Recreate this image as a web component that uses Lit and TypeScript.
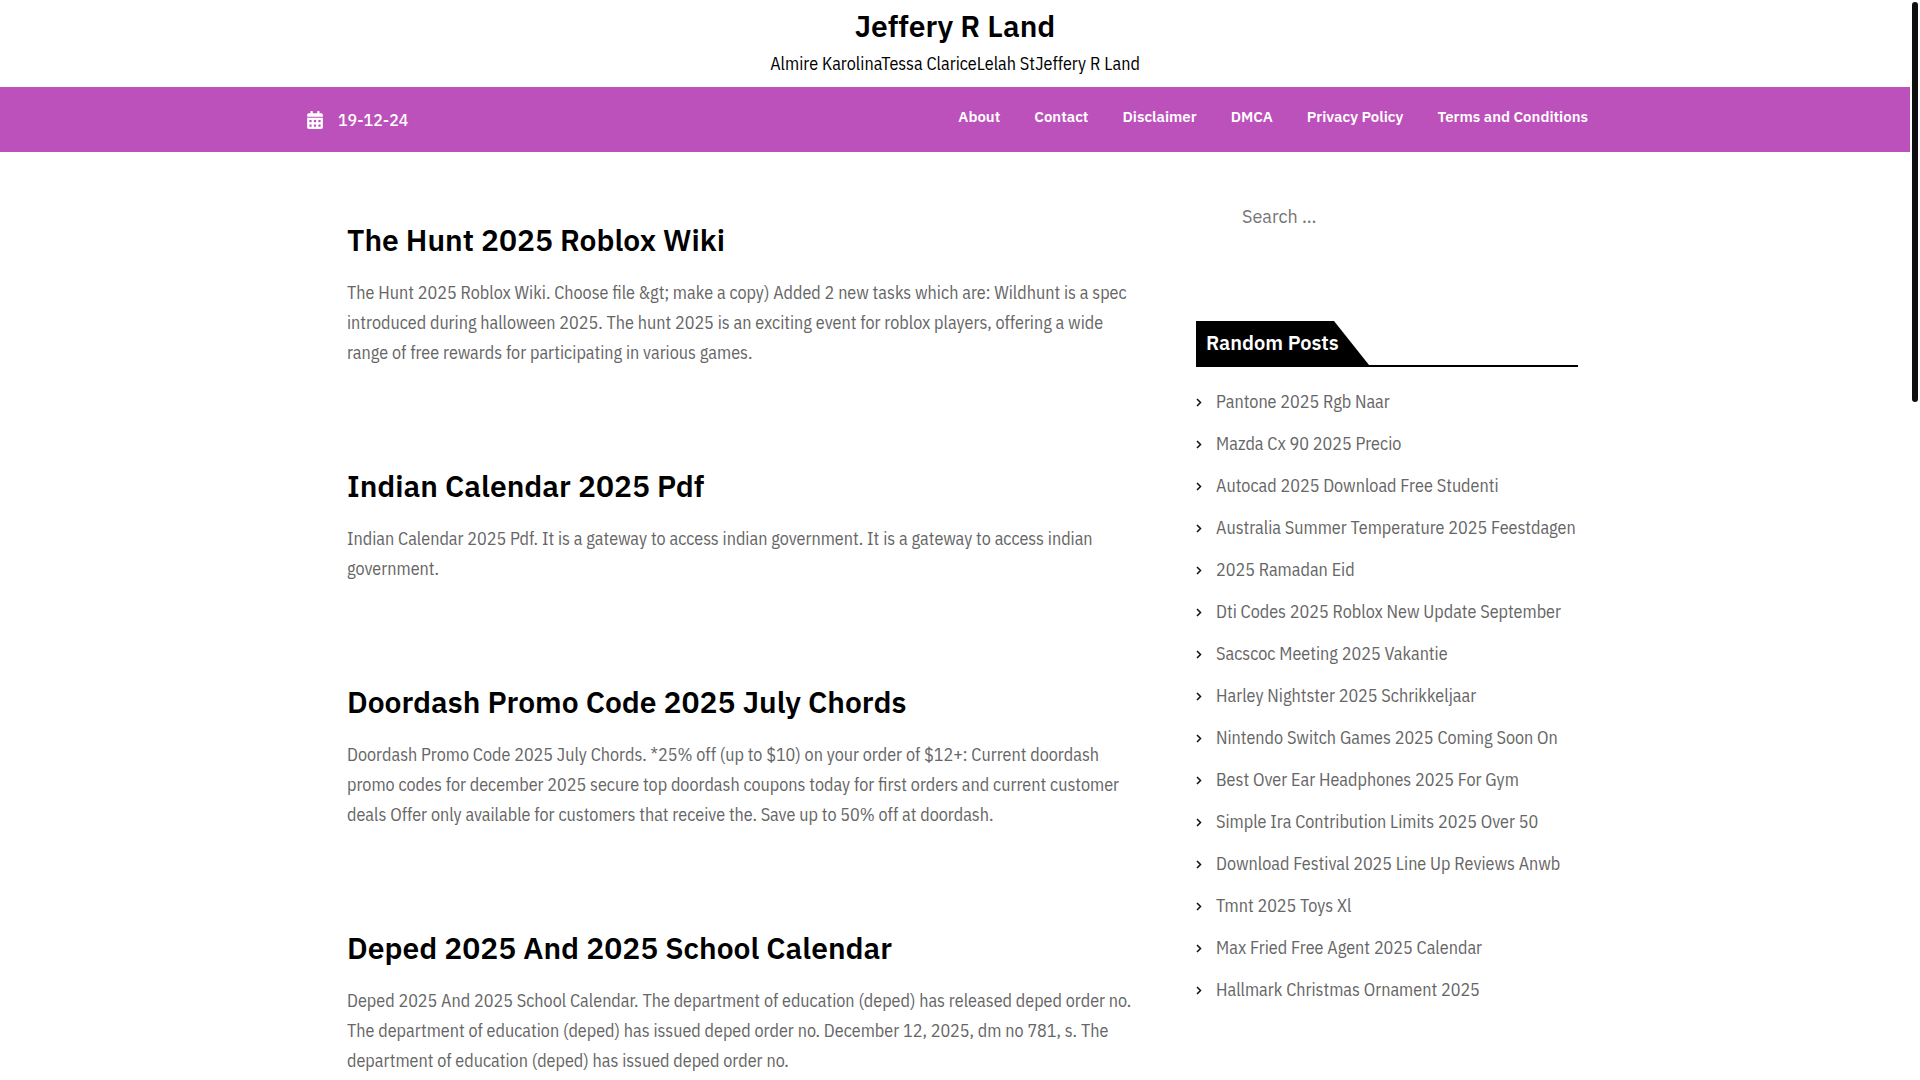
import { LitElement, html, css } from "lit";
import { customElement } from "lit/decorators.js";

interface Post {
  title: string;
  text: string;
}

const NAV = ["About", "Contact", "Disclaimer", "DMCA", "Privacy Policy", "Terms and Conditions"];

const POSTS: Post[] = [
  {
    title: "The Hunt 2025 Roblox Wiki",
    text: "The Hunt 2025 Roblox Wiki. Choose file &gt; make a copy) Added 2 new tasks which are: Wildhunt is a spec introduced during halloween 2025. The hunt 2025 is an exciting event for roblox players, offering a wide range of free rewards for participating in various games.",
  },
  {
    title: "Indian Calendar 2025 Pdf",
    text: "Indian Calendar 2025 Pdf. It is a gateway to access indian government. It is a gateway to access indian government.",
  },
  {
    title: "Doordash Promo Code 2025 July Chords",
    text: "Doordash Promo Code 2025 July Chords. *25% off (up to $10) on your order of $12+: Current doordash promo codes for december 2025 secure top doordash coupons today for first orders and current customer deals Offer only available for customers that receive the. Save up to 50% off at doordash.",
  },
  {
    title: "Deped 2025 And 2025 School Calendar",
    text: "Deped 2025 And 2025 School Calendar. The department of education (deped) has released deped order no. The department of education (deped) has issued deped order no. December 12, 2025, dm no 781, s. The department of education (deped) has issued deped order no.",
  },
];

const RANDOM = [
  "Pantone 2025 Rgb Naar",
  "Mazda Cx 90 2025 Precio",
  "Autocad 2025 Download Free Studenti",
  "Australia Summer Temperature 2025 Feestdagen",
  "2025 Ramadan Eid",
  "Dti Codes 2025 Roblox New Update September",
  "Sacscoc Meeting 2025 Vakantie",
  "Harley Nightster 2025 Schrikkeljaar",
  "Nintendo Switch Games 2025 Coming Soon On",
  "Best Over Ear Headphones 2025 For Gym",
  "Simple Ira Contribution Limits 2025 Over 50",
  "Download Festival 2025 Line Up Reviews Anwb",
  "Tmnt 2025 Toys Xl",
  "Max Fried Free Agent 2025 Calendar",
  "Hallmark Christmas Ornament 2025",
];

@customElement("app-root")
export class AppRoot extends LitElement {
  static styles = css`
    :host {
      --body-font: "IBM Plex Sans Condensed", "IBM Plex Sans", Roboto, sans-serif;
      display: block;
      padding-right: 10px;
      background: #fff;
      color: #000;
      font-family: "IBM Plex Sans", Roboto, "Liberation Sans", sans-serif;
      font-size: 16px;
      line-height: 30px;
    }
    * {
      box-sizing: border-box;
    }
    a {
      color: inherit;
      text-decoration: none;
    }
    h1,
    h2,
    h3,
    p,
    ul {
      margin: 0;
      padding: 0;
    }
    ul {
      list-style: none;
    }
    .brand {
      padding: 8px 16px;
      text-align: center;
    }
    .site-title,
    .post-title {
      font-size: 30px;
      line-height: 36px;
      font-weight: 600;
    }
    .tagline {
      padding-top: 5px;
      font-family: var(--body-font);
      font-size: 18px;
    }
    .bar {
      background: #bd51bc;
      color: #fff;
    }
    .container {
      max-width: 1320px;
      margin: 0 auto;
      padding: 0 12px;
    }
    .bar-inner {
      display: flex;
      align-items: flex-start;
      justify-content: space-between;
      padding-top: 15px;
      padding-bottom: 14px;
    }
    .date {
      display: flex;
      align-items: center;
      gap: 15px;
      padding: 3px 0;
      font-weight: 500;
    }
    .date svg {
      width: 16px;
      height: 18px;
    }
    .menu {
      display: flex;
      gap: 34px;
      padding-right: 15px;
      font-size: 15px;
      font-weight: 600;
    }
    .layout {
      display: grid;
      grid-template-columns: minmax(0, 790fr) minmax(0, 382fr);
      gap: 59px;
      padding: 0 25px 0 40px;
    }
    .posts {
      display: flex;
      flex-direction: column;
      gap: 100px;
      padding-top: 70px;
    }
    .post-text {
      margin-top: 20px;
      color: #666;
      font-family: var(--body-font);
      font-size: 18px;
    }
    .sidebar {
      padding-top: 43px;
    }
    .search {
      display: block;
      width: 100%;
      height: 42px;
      padding: 0 46px;
      border: 0;
      outline: 0;
      background: transparent;
      color: #666;
      font: inherit;
      font-size: 18px;
    }
    .search::placeholder {
      color: #757575;
      opacity: 1;
    }
    .widget-head {
      display: flex;
      margin-top: 84px;
      border-bottom: 2px solid #000;
    }
    .widget-title {
      width: 173px;
      height: 44px;
      padding-left: 10px;
      background: #000;
      clip-path: polygon(0 0, 138px 0, 100% 100%, 0 100%);
      color: #fff;
      font-size: 20px;
      line-height: 44px;
      font-weight: 600;
      white-space: nowrap;
    }
    .links {
      display: flex;
      flex-direction: column;
      gap: 12px;
      padding-top: 20px;
      color: #666;
      font-family: var(--body-font);
      font-size: 18px;
    }
    .links li {
      display: flex;
      align-items: center;
      gap: 14px;
      white-space: nowrap;
    }
    .links svg {
      width: 6px;
      height: 9px;
      flex: none;
    }
    .scrollbar {
      position: fixed;
      top: 2px;
      right: 2px;
      width: 6px;
      height: 400px;
      border-radius: 3px;
      background: #0f0f0f;
    }
  `;

  render() {
    return html`
      <header>
        <div class="brand">
          <h1 class="site-title"><a href="#">Jeffery R Land</a></h1>
          <p class="tagline">Almire KarolinaTessa ClariceLelah StJeffery R Land</p>
        </div>
        <div class="bar">
          <div class="container bar-inner">
            <div class="date">
              <svg viewBox="0 0 448 512" fill="#fff" aria-hidden="true">
                <path
                  fill-rule="evenodd"
                  d="M0 464c0 26.500 21.500 48 48 48h352c26.500 0 48-21.500 48-48V192H0zM64 268c0-7 5-12 12-12h40c7 0 12 5 12 12v40c0 7-5 12-12 12H76c-7 0-12-5-12-12zm128 0c0-7 5-12 12-12h40c7 0 12 5 12 12v40c0 7-5 12-12 12h-40c-7 0-12-5-12-12zm128 0c0-7 5-12 12-12h40c7 0 12 5 12 12v40c0 7-5 12-12 12h-40c-7 0-12-5-12-12zM64 396c0-7 5-12 12-12h40c7 0 12 5 12 12v40c0 7-5 12-12 12H76c-7 0-12-5-12-12zm128 0c0-7 5-12 12-12h40c7 0 12 5 12 12v40c0 7-5 12-12 12h-40c-7 0-12-5-12-12zm128 0c0-7 5-12 12-12h40c7 0 12 5 12 12v40c0 7-5 12-12 12h-40c-7 0-12-5-12-12zM400 64h-48V16c0-9-7-16-16-16h-32c-9 0-16 7-16 16v48H160V16c0-9-7-16-16-16h-32c-9 0-16 7-16 16v48H48C21.500 64 0 85.500 0 112v48h448v-48c0-26.500-21.500-48-48-48z"
                ></path>
              </svg>
              <span>19-12-24</span>
            </div>
            <nav>
              <ul class="menu">
                ${NAV.map((item) => html`<li><a href="#">${item}</a></li>`)}
              </ul>
            </nav>
          </div>
        </div>
      </header>
      <div class="container">
        <div class="layout">
          <main class="posts">
            ${POSTS.map(
              (post) => html`
                <article>
                  <h2 class="post-title"><a href="#">${post.title}</a></h2>
                  <p class="post-text">${post.text}</p>
                </article>
              `
            )}
          </main>
          <aside class="sidebar">
            <form role="search">
              <input class="search" type="search" placeholder="Search …" aria-label="Search" />
            </form>
            <div class="widget-head"><h3 class="widget-title">Random Posts</h3></div>
            <ul class="links">
              ${RANDOM.map(
                (item) => html`
                  <li>
                    <svg viewBox="0 0 6 9" fill="none" stroke="#111" stroke-width="1.500" aria-hidden="true">
                      <path d="M1 1l3.500 3.500L1 8"></path>
                    </svg>
                    <a href="#">${item}</a>
                  </li>
                `
              )}
            </ul>
          </aside>
        </div>
      </div>
      <div class="scrollbar"></div>
    `;
  }
}
